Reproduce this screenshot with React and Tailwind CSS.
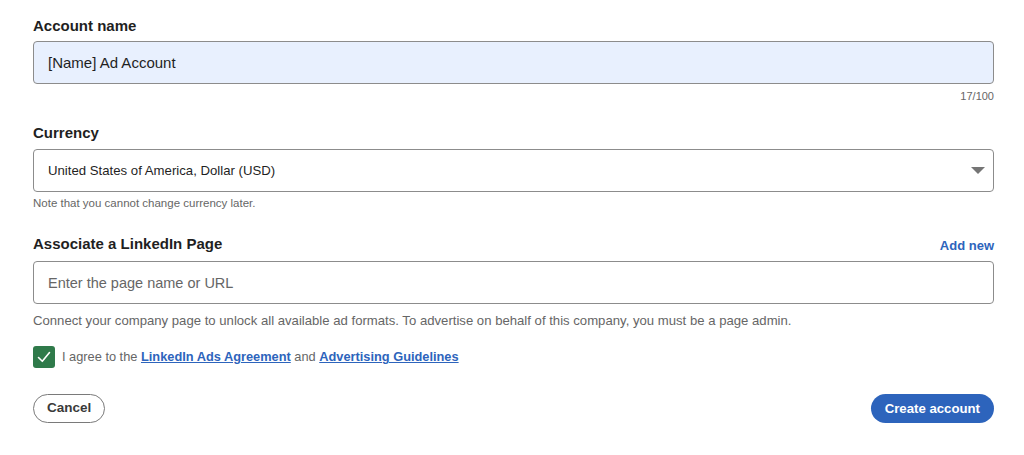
import React from "react";

export default function App() {
  return (
    <div className="w-[1024px] h-[455px] bg-white pl-[33px] pr-[30px] pt-[16px] text-[#1d1d1d]" style={{ fontFamily: '"Liberation Sans", Arial, sans-serif' }}>
      <div className="flex flex-col">
        <label className="text-[15px] font-bold leading-[20px] text-[#1f1f1f]">Account name</label>
        <div className="mt-[5px] h-[43px] rounded-[4px] border border-[#8c8c8c] bg-[#e8f0fe] flex items-center px-[14px] pt-[2px] text-[15px] text-[#1f1f1f]">
          [Name] Ad Account
        </div>
        <div className="mt-[5px] text-right text-[11px] leading-[14px] text-[#666]">17/100</div>

        <label className="mt-[20px] text-[15px] font-bold leading-[20px] text-[#1f1f1f]">Currency</label>
        <div className="mt-[6px] h-[43px] rounded-[4px] border border-[#8c8c8c] bg-white flex items-center justify-between pl-[14px] pr-[8px] pt-[1px] text-[13.2px] text-[#1f1f1f]">
          <span>United States of America, Dollar (USD)</span>
          <svg width="14" height="8" viewBox="0 0 14 8"><path d="M0 0h14L7 7z" fill="#757575" /></svg>
        </div>
        <div className="mt-[4px] text-[11.5px] leading-[14px] text-[#666]">Note that you cannot change currency later.</div>

        <div className="mt-[24px] flex items-end justify-between">
          <label className="text-[15px] font-bold leading-[20px] text-[#1f1f1f]">Associate a LinkedIn Page</label>
          <a className="text-[13px] font-bold leading-[16px] text-[#2d64bc]">Add new</a>
        </div>
        <div className="mt-[7px] h-[43px] rounded-[4px] border border-[#8c8c8c] bg-white flex items-center px-[14px] pt-[2px] text-[14.5px] text-[#666]">
          Enter the page name or URL
        </div>
        <div className="mt-[9px] text-[13.15px] leading-[16px] text-[#666]">
          Connect your company page to unlock all available ad formats. To advertise on behalf of this company, you must be a page admin.
        </div>

        <div className="mt-[17px] flex items-center gap-[7px]">
          <div className="w-[22px] h-[22px] rounded-[3px] bg-[#2f7a4a] flex items-center justify-center">
            <svg width="14" height="12" viewBox="0 0 14 12"><path d="M1.5 6.5l3.8 3.8L12.5 1.5" fill="none" stroke="white" strokeWidth="1.6" strokeLinecap="round" strokeLinejoin="round" /></svg>
          </div>
          <span className="text-[12.8px] text-[#666]">
            I agree to the <a className="font-bold text-[#2d64bc] underline">LinkedIn Ads Agreement</a> and <a className="font-bold text-[#2d64bc] underline">Advertising Guidelines</a>
          </span>
        </div>

        <div className="mt-[26px] flex items-center justify-between">
          <button className="h-[29px] px-[13px] rounded-full border border-[#7a7a7a] text-[13.5px] font-bold text-[#3a3a3a] bg-white">Cancel</button>
          <button className="h-[29px] px-[14px] rounded-full bg-[#2d64bc] text-[13.2px] font-bold text-white">Create account</button>
        </div>
      </div>
    </div>
  );
}
